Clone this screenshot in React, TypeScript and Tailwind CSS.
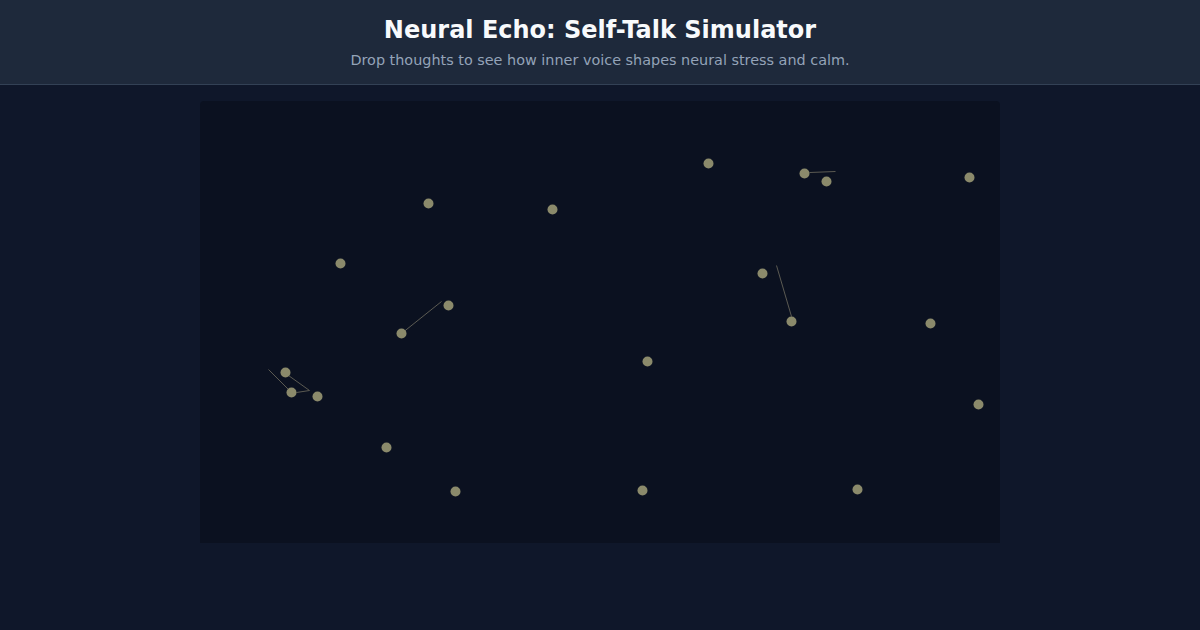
const nodes: [number, number][] = [
  [708, 163], [804, 173], [826, 181], [969, 177], [428, 203], [552, 209],
  [340, 263], [762, 273], [448, 305], [401, 333], [791, 321], [930, 323],
  [647, 361], [285, 372], [291, 392], [317, 396], [978, 404], [386, 447],
  [455, 491], [642, 490], [857, 489],
];

// synapse links, in page coordinates
const links: [number, number, number, number][] = [
  [809, 172, 835, 171],
  [776, 265, 791, 316],
  [401, 333, 441, 301],
  [268, 369, 290, 391],
  [288, 375, 309, 390],
  [296, 392, 309, 390],
];

const OX = 199.5;
const OY = 100.5;

export default function App() {
  return (
    <div className="min-h-screen bg-[#0f172a] font-['DejaVu_Sans',sans-serif]">
      <header className="bg-[#1e293b] border-b border-[#334155] pt-[14px] pb-[14px] text-center">
        <h1 className="text-[24px] leading-8 font-bold text-[#f8fafc]">Neural Echo: Self-Talk Simulator</h1>
        <p className="mt-1 text-[14.4px] leading-5 text-[#94a3b8]">
          Drop thoughts to see how inner voice shapes neural stress and calm.
        </p>
      </header>
      <main className="flex justify-center pt-4">
        <div className="w-[800px] h-[442px] bg-[#0b1120] rounded-t-[4px] overflow-hidden">
          <svg width="800" height="442" viewBox="0 0 800 442">
            {links.map(([x1, y1, x2, y2], i) => (
              <line
                key={i}
                x1={x1 - OX}
                y1={y1 - OY}
                x2={x2 - OX}
                y2={y2 - OY}
                stroke="#5b5a52"
                strokeWidth="1"
              />
            ))}
            {nodes.map(([x, y], i) => (
              <circle key={i} cx={x - OX} cy={y - OY} r="5" fill="#8b8a6b" />
            ))}
          </svg>
        </div>
      </main>
    </div>
  );
}
